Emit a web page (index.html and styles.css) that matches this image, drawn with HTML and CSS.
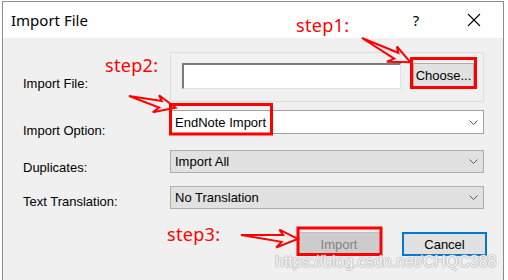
FILE: index.html
```html
<!DOCTYPE html>
<html>
<head>
    <link rel="stylesheet" href="styles.css">
</head>
<body>

    <div class="window">
        <div class="titlebar">
            <span class="title">Import File</span>
            <span class="help">?</span>
            <span class="close">
                <svg width="14" height="14" viewBox="0 0 14 14"><path d="M1 1 L13 13 M13 1 L1 13" stroke="#000" stroke-width="1.1" fill="none"/></svg>
            </span>
        </div>

        <div class="content">
            <div class="row row-file">
                <div class="row-label label-file">Import File:</div>
                <div class="group">
                    <div class="file-input"></div>
                    <button class="btn btn-choose">Choose...</button>
                </div>
            </div>

            <div class="row row-option">
                <div class="row-label label-option">Import Option:</div>
                <div class="select select-white">
                    <span>EndNote Import</span>
                    <svg width="9" height="5" viewBox="0 0 9 5"><path d="M0.5 0.5 L4.5 4.5 L8.5 0.5" stroke="#555" fill="none"/></svg>
                </div>
            </div>

            <div class="row row-dup">
                <div class="row-label label-dup">Duplicates:</div>
                <div class="select select-small">
                    <span>Import All</span>
                    <svg width="9" height="5" viewBox="0 0 9 5"><path d="M0.5 0.5 L4.5 4.5 L8.5 0.5" stroke="#555" fill="none"/></svg>
                </div>
            </div>

            <div class="row row-trans">
                <div class="row-label label-trans">Text Translation:</div>
                <div class="select select-small">
                    <span>No Translation</span>
                    <svg width="9" height="5" viewBox="0 0 9 5"><path d="M0.5 0.5 L4.5 4.5 L8.5 0.5" stroke="#555" fill="none"/></svg>
                </div>
            </div>

            <div class="actions">
                <button class="btn btn-import">Import</button>
                <button class="btn btn-cancel">Cancel</button>
            </div>
        </div>
    </div>

    <!-- red annotations drawn over the dialog -->
    <svg class="annot" width="508" height="280" viewBox="0 0 508 280">
        <g fill="none" stroke="#ff0000" stroke-width="3">
            <rect x="411.5" y="58.5" width="64" height="29"/>
            <rect x="170.5" y="104.5" width="101" height="29.5"/>
            <rect x="298" y="228" width="83" height="26.5"/>
        </g>
        <g fill="none" stroke="#ff0000" stroke-width="2" stroke-linejoin="miter">
            <polygon transform="translate(362,38) rotate(26.6)" points="0,0 39,-3 35,-8 54,0 33,10 38,4"/>
            <polygon transform="translate(129,96) rotate(14)" points="0,0 33,-3 29,-8 48,0 27,10 32,4"/>
            <polygon transform="translate(241,235) rotate(4)" points="0,0 42,-3 38,-8 57,0 36,10 41,4"/>
        </g>
    </svg>

    <div class="step step1">step1:</div>
    <div class="step step2">step2:</div>
    <div class="step step3">step3:</div>

    <div class="watermark">https://blog.csdn.net/CHQC388</div>

</body>
</html>
```

FILE: styles.css
```css
* {
    box-sizing: border-box;
}
body {
    margin: 0;
    width: 508px;
    height: 280px;
    overflow: hidden;
    position: relative;
    background-color: #fff;
    font-family: "Liberation Sans", Arial, sans-serif;
    font-size: 13px;
    color: #000;
}
.window {
    margin: 1px 0 0 2px;
    width: 502px;
    height: 279px;
    border: 1px solid #8c8c8c;
    border-bottom: none;
    display: flex;
    flex-direction: column;
}
.titlebar {
    height: 36px;
    background-color: #fff;
    display: flex;
    align-items: center;
    padding-left: 8px;
    font-family: "Noto Sans", sans-serif;
}
.title {
    font-size: 15px;
    line-height: 20px;
}
.help {
    margin-left: auto;
    width: 20px;
    text-align: center;
    font-size: 15px;
    line-height: 20px;
}
.close {
    display: flex;
    width: 14px;
    height: 14px;
    margin-left: 41px;
    margin-right: 22px;
}
.content {
    flex: 1;
    background-color: #f0f0f0;
    padding: 14px 16px 0 20px;
}
.row {
    display: flex;
    align-items: flex-start;
}
.row-label {
    width: 147px;
    line-height: 16px;
    white-space: nowrap;
}
.label-file {
    padding-top: 24px;
}
.label-option {
    padding-top: 13px;
}
.label-dup {
    padding-top: 10px;
}
.label-trans {
    padding-top: 8px;
}
/* fixed row heights so the label offsets do not push the rows apart */
.row-file {
    height: 50px;
}
.row-option {
    margin-top: 8px;
    height: 24px;
}
.row-dup {
    margin-top: 16px;
    height: 23px;
}
.row-trans {
    margin-top: 13px;
    height: 23px;
}
.group {
    width: 314px;
    height: 50px;
    border: 1px solid #dcdcdc;
    padding: 10px 0 0 11px;
    display: flex;
    align-items: flex-start;
}
.file-input {
    width: 219px;
    height: 26px;
    background-color: #fff;
    border-style: solid;
    border-width: 2px 1px 1px 2px;
    border-color: #7a7a7a #e3e3e3 #e3e3e3 #7a7a7a;
}
.btn {
    font: inherit;
    color: #000;
    padding: 0;
    height: 24px;
    background-color: #e1e1e1;
    border: 1px solid #adadad;
    text-align: center;
}
.btn-choose {
    margin-left: 12px;
    width: 61px;
}
.select {
    width: 314px;
    display: flex;
    align-items: center;
    justify-content: space-between;
    padding: 0 5px 0 4px;
    border: 1px solid #adadad;
    background-color: #e1e1e1;
}
.select-white {
    height: 24px;
    background-color: #fff;
    border-color: #a0a0a0;
}
.select-small {
    height: 23px;
}
.actions {
    display: flex;
    justify-content: flex-end;
    gap: 21px;
    margin-top: 23px;
}
.btn-import {
    width: 84px;
    background-color: #cccccc;
    border-color: #bfbfbf;
    color: #838383;
}
.btn-cancel {
    width: 85px;
    border: 2px solid #0078d7;
}
.annot {
    position: absolute;
    left: 0;
    top: 0;
    pointer-events: none;
}
.step {
    position: absolute;
    color: #ff0000;
    font-family: "Noto Sans", sans-serif;
    font-size: 18px;
    line-height: 20px;
    letter-spacing: 0.3px;
}
.step1 {
    left: 296px;
    top: 15px;
}
.step2 {
    left: 105px;
    top: 55px;
}
.step3 {
    left: 167px;
    top: 224px;
}
.watermark {
    position: absolute;
    left: 275px;
    top: 253px;
    font-size: 16px;
    line-height: 18px;
    color: rgba(255, 255, 255, 0.9);
    text-shadow: 1px 0 0 rgba(160, 160, 160, 0.45), -1px 0 0 rgba(160, 160, 160, 0.45),
        0 1px 0 rgba(160, 160, 160, 0.45), 0 -1px 0 rgba(160, 160, 160, 0.45);
}
```
